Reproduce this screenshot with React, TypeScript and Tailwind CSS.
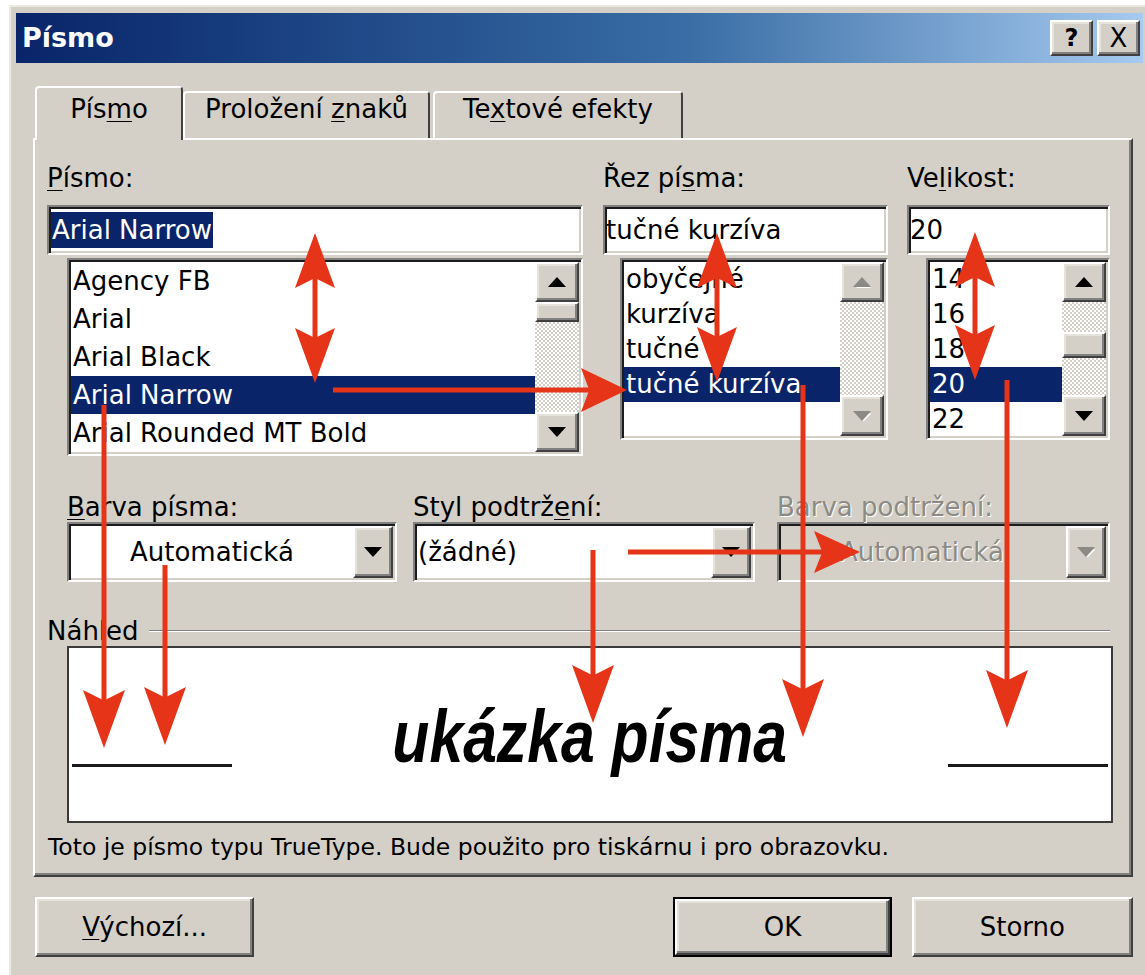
import React from "react";

const RAISED =
  "border-2 border-t-white border-l-white border-r-[#404040] border-b-[#404040] shadow-[inset_-2px_-2px_0_#808080,inset_2px_2px_0_#e6e3dc]";
const SUNKEN =
  "border-2 border-t-[#808080] border-l-[#808080] border-r-white border-b-white shadow-[inset_2px_2px_0_#1c1c1c,inset_-2px_-2px_0_#d4d0c8] p-[2px]";
const RED = "#e53418";

const Tri = ({ up, off }: { up?: boolean; off?: boolean }) => (
  <svg width="22" height="12" viewBox="0 0 22 12">
    {off && (
      <polygon points={up ? "3,11 11,3 19,11" : "3,2 11,10 19,2"} fill="#fff" transform="translate(1.5,1.5)" />
    )}
    <polygon points={up ? "2,11 11,1 20,11" : "2,1 11,11 20,1"} fill={off ? "#8c8a84" : "#000"} />
  </svg>
);

const ScrollBtn = ({ up, off, h }: { up?: boolean; off?: boolean; h: string }) => (
  <div className={`${RAISED} ${h} flex items-center justify-center bg-[#d4d0c8]`}>
    <Tri up={up} off={off} />
  </div>
);

type Bar = { thumbTop?: string; thumbH?: string; off?: boolean; downH: string };

const ScrollBar = ({ thumbTop, thumbH, off, downH }: Bar) => (
  <div className="flex w-[44px] flex-col">
    <ScrollBtn up off={off} h="h-[40px]" />
    <div className="flex-1 bg-[image:repeating-conic-gradient(#d4d0c8_0%_25%,#ffffff_0%_50%)] bg-[length:4px_4px]">
      {!off && <div className={`${RAISED} ${thumbTop} ${thumbH} bg-[#d4d0c8]`} />}
    </div>
    <ScrollBtn off={off} h={downH} />
  </div>
);

type ListProps = {
  items: string[];
  sel: number;
  row: string;
  box: string;
  bar: Bar;
};

const ListBox = ({ items, sel, row, box, bar }: ListProps) => (
  <div className={`${SUNKEN} ${box} flex bg-white`}>
    <div className="flex-1 overflow-hidden">
      {items.map((t, i) => (
        <div key={t + i} className={`${row} whitespace-nowrap pl-[2px] ${i === sel ? "bg-[#0a246a] text-white" : ""}`}>
          {t}
        </div>
      ))}
    </div>
    <ScrollBar {...bar} />
  </div>
);

const Combo = ({ text, off, pad, w }: { text: string; off?: boolean; pad: string; w: string }) => (
  <div className={`${SUNKEN} ${w} flex h-[60px] ${off ? "bg-[#d4d0c8]" : "bg-white"}`}>
    <div className={`flex flex-1 items-center ${pad} ${off ? "text-[#8c8a84] [text-shadow:1px_1px_0_#fff]" : ""}`}>{text}</div>
    <div className={`${RAISED} flex w-[40px] items-center justify-center bg-[#d4d0c8]`}>
      <Tri off={off} />
    </div>
  </div>
);

const U = ({ children }: { children: React.ReactNode }) => <span className="underline decoration-1 underline-offset-[3px]">{children}</span>;

// arrow heads: tip point, length along the shaft, width across it
const down = (x: number, t: number, l = 58, w = 42) =>
  `${x},${t} ${x - w / 2},${t - l} ${x},${t - l * 0.82} ${x + w / 2},${t - l}`;
const up = (x: number, t: number, l = 55, w = 40) =>
  `${x},${t} ${x - w / 2},${t + l} ${x},${t + l * 0.82} ${x + w / 2},${t + l}`;
const right = (y: number, t: number, l = 46, w = 44) =>
  `${t},${y} ${t - l},${y - w / 2} ${t - l * 0.82},${y} ${t - l},${y + w / 2}`;

const Arrows = () => (
  <svg className="pointer-events-none absolute left-0 top-0" width="1145" height="975" viewBox="0 0 1145 975">
    <g stroke={RED} strokeWidth="5" fill="none">
      <line x1="315" y1="260" x2="315" y2="360" />
      <line x1="333" y1="390" x2="600" y2="390" />
      <line x1="717" y1="260" x2="717" y2="360" />
      <line x1="975" y1="258" x2="975" y2="358" />
      <line x1="104" y1="405" x2="104" y2="720" />
      <line x1="165" y1="565" x2="165" y2="720" />
      <line x1="593" y1="550" x2="593" y2="700" />
      <line x1="628" y1="552" x2="835" y2="552" />
      <line x1="803" y1="385" x2="803" y2="710" />
      <line x1="1007" y1="380" x2="1007" y2="700" />
    </g>
    <g fill={RED}>
      <polygon points={up(315, 233)} />
      <polygon points={down(315, 383, 55, 40)} />
      <polygon points={right(390, 627)} />
      <polygon points={up(717, 233)} />
      <polygon points={down(717, 382, 55, 40)} />
      <polygon points={up(975, 232)} />
      <polygon points={down(975, 380, 55, 40)} />
      <polygon points={down(104, 748)} />
      <polygon points={down(165, 745)} />
      <polygon points={down(593, 723)} />
      <polygon points={right(552, 860, 46, 42)} />
      <polygon points={down(803, 737)} />
      <polygon points={down(1007, 728)} />
    </g>
  </svg>
);

export default function App() {
  return (
    <div className="relative h-[975px] w-[1145px] overflow-hidden bg-white font-['DejaVu_Sans',sans-serif] text-[26px] leading-[30px] text-black">
      <div className="ml-[9px] mt-[5px] h-[1000px] w-[1141px] border-l-2 border-t-2 border-l-[#ebe9e4] border-t-[#ebe9e4] bg-[#d4d0c8] pl-[5px] pr-[7px] pt-[6px]">
        {/* caption */}
        <div className="flex h-[50px] items-center bg-linear-to-r from-[#0a246a] via-[#3a6ea5] via-60% to-[#a6caf0] pl-[6px] pr-[3px]">
          <span className="flex-1 text-[27px] font-bold text-white">Písmo</span>
          <div className={`${RAISED} flex h-[36px] w-[43px] items-center justify-center bg-[#d4d0c8] text-[24px] font-bold`}>?</div>
          <div className={`${RAISED} ml-[4px] flex h-[36px] w-[43px] items-center justify-center bg-[#d4d0c8] text-[26px]`}>X</div>
        </div>

        <div className="ml-[17px] w-[1100px]">
          {/* tabs */}
          <div className="mt-[23px] flex h-[52px] items-start">
            <div className="relative z-10 ml-[2px] flex h-[54px] w-[148px] justify-center rounded-t-[4px] border-l-2 border-r-2 border-t-2 border-l-white border-r-[#404040] border-t-white bg-[#d4d0c8] pt-[6px]">
              <span>
                Pís<U>m</U>o
              </span>
            </div>
            <div className="mt-[5px] flex h-[47px] w-[247px] justify-center rounded-t-[4px] border-l-2 border-r-2 border-t-2 border-l-white border-r-[#404040] border-t-white pt-[1px]">
              <span>
                Proložení <U>z</U>naků
              </span>
            </div>
            <div className="ml-[3px] mt-[5px] flex h-[47px] w-[250px] justify-center rounded-t-[4px] border-l-2 border-r-2 border-t-2 border-l-white border-r-[#404040] border-t-white pt-[1px]">
              <span>
                Te<U>x</U>tové efekty
              </span>
            </div>
          </div>

          {/* tab page */}
          <div className="h-[739px] border-2 border-b-[#404040] border-l-white border-r-[#404040] border-t-white pl-[12px] shadow-[inset_-2px_-2px_0_#808080]">
            <div className="mt-[23px] flex">
              <div className="w-[536px]">
                <div className="h-[30px]">
                  <U>P</U>ísmo:
                </div>
                <div className={`${SUNKEN} mt-[12px] flex h-[50px] items-center bg-white`}>
                  <span className="bg-[#0a246a] px-[1px] leading-[36px] text-white">Arial Narrow</span>
                </div>
                <ListBox
                  box="ml-[20px] mt-[3px] h-[198px] w-[516px]"
                  row="h-[38px] leading-[38px]"
                  items={["Agency FB", "Arial", "Arial Black", "Arial Narrow", "Arial Rounded MT Bold"]}
                  sel={3}
                  bar={{ thumbTop: "mt-0", thumbH: "h-[20px]", downH: "h-[40px]" }}
                />
              </div>
              <div className="ml-[20px] w-[285px]">
                <div className="h-[30px]">
                  Řez pí<U>s</U>ma:
                </div>
                <div className={`${SUNKEN} mt-[12px] flex h-[50px] items-center bg-white pl-[1px]`}>tučné kurzíva</div>
                <ListBox
                  box="ml-[17px] mt-[3px] h-[182px] w-[268px]"
                  row="h-[35px] leading-[35px]"
                  items={["obyčejné", "kurzíva", "tučné", "tučné kurzíva", ""]}
                  sel={3}
                  bar={{ off: true, downH: "h-[41px]" }}
                />
              </div>
              <div className="ml-[19px] w-[203px]">
                <div className="h-[30px]">
                  Ve<U>l</U>ikost:
                </div>
                <div className={`${SUNKEN} mt-[12px] flex h-[50px] items-center bg-white pl-[1px]`}>20</div>
                <ListBox
                  box="ml-[19px] mt-[3px] h-[182px] w-[184px]"
                  row="h-[35px] leading-[35px]"
                  items={["14", "16", "18", "20", "22"]}
                  sel={3}
                  bar={{ thumbTop: "mt-[30px]", thumbH: "h-[26px]", downH: "h-[41px]" }}
                />
              </div>
            </div>

            {/* colour and underline */}
            <div className="ml-[20px] mt-[36px] flex">
              <div className="w-[330px]">
                <div className="h-[30px]">
                  <U>B</U>arva písma:
                </div>
                <Combo text="Automatická" pad="pl-[59px]" w="w-[330px]" />
              </div>
              <div className="ml-[16px] w-[342px]">
                <div className="h-[30px]">
                  Styl podtrž<U>e</U>ní:
                </div>
                <Combo text="(žádné)" pad="pl-[1px]" w="w-[342px]" />
              </div>
              <div className="ml-[22px] w-[333px]">
                <div className="h-[30px] text-[#8c8a84] [text-shadow:1px_1px_0_#fff]">Barva podtržení:</div>
                <Combo text="Automatická" off pad="pl-[59px]" w="w-[333px]" />
              </div>
            </div>

            {/* preview */}
            <div className="mt-[34px] flex h-[30px] items-center pr-[21px]">
              <span>Náhled</span>
              <div className="ml-[10px] h-0 flex-1 border-b border-t border-b-white border-t-[#808080]" />
            </div>
            <div className="ml-[20px] h-[177px] w-[1046px] border-2 border-[#3a3a3a] bg-white px-[3px] pt-[52px]">
              <div className="flex items-baseline justify-between">
                <div className="h-[3px] w-[160px] translate-y-[5px] bg-[#1a1a1a]" />
                <span className="inline-block scale-x-[0.82] font-['Liberation_Sans',sans-serif] text-[74px] font-bold italic leading-[74px]">
                  ukázka písma
                </span>
                <div className="h-[3px] w-[160px] translate-y-[5px] bg-[#1a1a1a]" />
              </div>
            </div>
            <div className="ml-px mt-[11px] text-[23.5px] leading-[26px]">
              Toto je písmo typu TrueType. Bude použito pro tiskárnu i pro obrazovku.
            </div>
          </div>

          {/* dialog buttons */}
          <div className="mt-[20px] flex">
            <div className={`${RAISED} ml-[2px] flex h-[60px] w-[220px] items-center justify-center bg-[#d4d0c8]`}>
              <span>
                <U>V</U>ýchozí...
              </span>
            </div>
            <div className="ml-[419px] h-[60px] w-[219px] border-2 border-black">
              <div className={`${RAISED} flex h-full items-center justify-center bg-[#d4d0c8]`}>OK</div>
            </div>
            <div className={`${RAISED} ml-[20px] flex h-[60px] w-[222px] items-center justify-center bg-[#d4d0c8]`}>Storno</div>
          </div>
        </div>
      </div>
      <Arrows />
    </div>
  );
}
